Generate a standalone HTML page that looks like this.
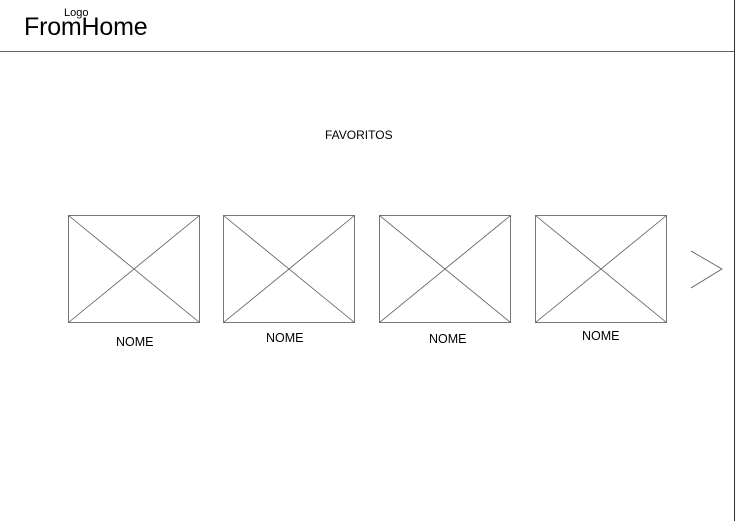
<!DOCTYPE html>
<html><head><style>
html,body{margin:0;padding:0;background:#fff;}
body{width:736px;height:521px;position:relative;overflow:hidden;font-family:"Liberation Sans",sans-serif;color:#000;}
.t{position:absolute;white-space:nowrap;}
</style></head><body>
<svg width="736" height="521" style="position:absolute;left:0;top:0">
<line x1="0" y1="51.5" x2="734" y2="51.5" stroke="#666" stroke-width="1"/>
<line x1="734.5" y1="0" x2="734.5" y2="521" stroke="#333" stroke-width="1"/>
<g fill="none" stroke="#555" stroke-width="0.8">
<rect x="68.5" y="215.5" width="131" height="107"/><line x1="68.5" y1="215.5" x2="199.5" y2="322.5"/><line x1="199.5" y1="215.5" x2="68.5" y2="322.5"/>
<rect x="223.5" y="215.5" width="131" height="107"/><line x1="223.5" y1="215.5" x2="354.5" y2="322.5"/><line x1="354.5" y1="215.5" x2="223.5" y2="322.5"/>
<rect x="379.5" y="215.5" width="131" height="107"/><line x1="379.5" y1="215.5" x2="510.5" y2="322.5"/><line x1="510.5" y1="215.5" x2="379.5" y2="322.5"/>
<rect x="535.5" y="215.5" width="131" height="107"/><line x1="535.5" y1="215.5" x2="666.5" y2="322.5"/><line x1="666.5" y1="215.5" x2="535.5" y2="322.5"/>
<polyline points="691,251 722,269 691,288"/>
</g>
</svg>
<div class="t" style="left:64px;top:7px;font-size:11px;">Logo</div>
<div class="t" style="left:24px;top:13px;font-size:25px;letter-spacing:-0.2px;">FromHome</div>
<div class="t" style="left:325px;top:128px;font-size:12px;">FAVORITOS</div>
<div class="t" style="left:116px;top:335px;font-size:12.5px;">NOME</div>
<div class="t" style="left:266px;top:331px;font-size:12.5px;">NOME</div>
<div class="t" style="left:429px;top:332px;font-size:12.5px;">NOME</div>
<div class="t" style="left:582px;top:329px;font-size:12.5px;">NOME</div>
</body></html>
